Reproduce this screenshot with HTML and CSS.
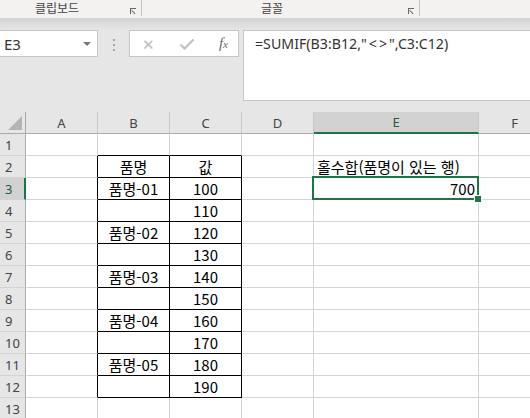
FILE: index.html
```html
<!DOCTYPE html>
<html lang="ko">
  <head>
    <meta charset="UTF-8" />
    <title>SUMIF</title>
    <link rel="stylesheet" href="styles.css">
  </head>
  <body>
    <div class="ribbon">
      <div class="group g-clip">
        <span class="group-label">클립보드</span>
        <span class="launcher"></span>
      </div>
      <div class="group g-font">
        <span class="group-label">글꼴</span>
        <span class="launcher"></span>
      </div>
    </div>
    <div class="ribbon-shadow"></div>

    <div class="formula-bar">
      <div class="name-box">
        <span>E3</span>
        <span class="caret"></span>
      </div>
      <div class="grip"><i></i><i></i><i></i></div>
      <div class="fx-buttons">
        <span class="btn-x">✕</span>
        <svg class="btn-ok" width="16" height="12" viewBox="0 0 16 12">
          <path d="M1.5 6.5 L5.5 10.5 L14.5 1.5" fill="none" stroke="#c3c3c3" stroke-width="2.4" />
        </svg>
        <span class="btn-fx"><i>f</i><i class="x">x</i></span>
      </div>
      <div class="formula">=SUMIF(B3:B12,"<span class="op">&lt;&gt;</span>",C3:C12)</div>
    </div>

    <div class="sheet">
      <!-- header -->
      <div class="corner"><span class="tri"></span></div>
      <div class="ch">A</div>
      <div class="ch">B</div>
      <div class="ch">C</div>
      <div class="ch">D</div>
      <div class="ch active">E</div>
      <div class="ch">F</div>

      <!-- 1 -->
      <div class="rh">1</div>
      <div class="c"></div>
      <div class="c tb"></div>
      <div class="c tb"></div>
      <div class="c"></div>
      <div class="c"></div>
      <div class="c"></div>

      <!-- 2 -->
      <div class="rh">2</div>
      <div class="c tr"></div>
      <div class="c box mid">품명</div>
      <div class="c box mid">값</div>
      <div class="c"></div>
      <div class="c">홀수합(품명이 있는 행)</div>
      <div class="c"></div>

      <!-- 3 -->
      <div class="rh active">3</div>
      <div class="c tr"></div>
      <div class="c box mid">품명-01</div>
      <div class="c box mid">100</div>
      <div class="c"></div>
      <div class="c num selected">700<span class="sel"><span class="handle"></span></span></div>
      <div class="c"></div>

      <!-- 4 -->
      <div class="rh">4</div>
      <div class="c tr"></div>
      <div class="c box mid"></div>
      <div class="c box mid">110</div>
      <div class="c"></div>
      <div class="c"></div>
      <div class="c"></div>

      <!-- 5 -->
      <div class="rh">5</div>
      <div class="c tr"></div>
      <div class="c box mid">품명-02</div>
      <div class="c box mid">120</div>
      <div class="c"></div>
      <div class="c"></div>
      <div class="c"></div>

      <!-- 6 -->
      <div class="rh">6</div>
      <div class="c tr"></div>
      <div class="c box mid"></div>
      <div class="c box mid">130</div>
      <div class="c"></div>
      <div class="c"></div>
      <div class="c"></div>

      <!-- 7 -->
      <div class="rh">7</div>
      <div class="c tr"></div>
      <div class="c box mid">품명-03</div>
      <div class="c box mid">140</div>
      <div class="c"></div>
      <div class="c"></div>
      <div class="c"></div>

      <!-- 8 -->
      <div class="rh">8</div>
      <div class="c tr"></div>
      <div class="c box mid"></div>
      <div class="c box mid">150</div>
      <div class="c"></div>
      <div class="c"></div>
      <div class="c"></div>

      <!-- 9 -->
      <div class="rh">9</div>
      <div class="c tr"></div>
      <div class="c box mid">품명-04</div>
      <div class="c box mid">160</div>
      <div class="c"></div>
      <div class="c"></div>
      <div class="c"></div>

      <!-- 10 -->
      <div class="rh">10</div>
      <div class="c tr"></div>
      <div class="c box mid"></div>
      <div class="c box mid">170</div>
      <div class="c"></div>
      <div class="c"></div>
      <div class="c"></div>

      <!-- 11 -->
      <div class="rh">11</div>
      <div class="c tr"></div>
      <div class="c box mid">품명-05</div>
      <div class="c box mid">180</div>
      <div class="c"></div>
      <div class="c"></div>
      <div class="c"></div>

      <!-- 12 -->
      <div class="rh">12</div>
      <div class="c tr"></div>
      <div class="c box mid"></div>
      <div class="c box mid">190</div>
      <div class="c"></div>
      <div class="c"></div>
      <div class="c"></div>

      <!-- 13 -->
      <div class="rh">13</div>
      <div class="c"></div>
      <div class="c"></div>
      <div class="c"></div>
      <div class="c"></div>
      <div class="c"></div>
      <div class="c"></div>
    </div>
  </body>
</html>
```

FILE: styles.css
```css
html,
body {
  margin: 0;
  padding: 0;
}
body {
  width: 530px;
  height: 418px;
  overflow: hidden;
  background: #e6e6e6;
  font-family: "Noto Sans", "Noto Sans CJK KR", sans-serif;
  color: #222;
}

/* ribbon strip */
.ribbon {
  display: flex;
  height: 18px;
  background: #f3f2f1;
}
.group {
  position: relative;
  display: flex;
  align-items: center;
  height: 16px;
  border-right: 1px solid #c8c6c4;
  box-sizing: border-box;
}
.g-clip {
  width: 142px;
  padding-left: 35px;
}
.g-font {
  width: 278px;
  padding-left: 119px;
}
.group-label {
  font-family: "Noto Sans CJK KR", sans-serif;
  font-size: 12px;
  line-height: 16px;
  color: #444;
}
.launcher {
  position: absolute;
  right: 5px;
  top: 8px;
  width: 5px;
  height: 5px;
  border-left: 1px solid #666;
  border-top: 1px solid #666;
}
.launcher::after {
  content: "";
  position: absolute;
  left: 1px;
  top: 1px;
  width: 5px;
  height: 1px;
  background: #666;
  transform-origin: 0 0;
  transform: rotate(45deg);
}
.ribbon-shadow {
  height: 12px;
  background: linear-gradient(#d3d3d3, #e6e6e6);
}

/* formula bar */
.formula-bar {
  display: flex;
  height: 71px;
}
.name-box {
  display: flex;
  align-items: center;
  justify-content: space-between;
  width: 98px;
  height: 27px;
  box-sizing: border-box;
  padding: 0 6px 0 4px;
  background: #fff;
  border: 1px solid #c6c6c6;
  border-left: none;
  font-size: 15px;
  color: #333;
}
.caret {
  width: 0;
  height: 0;
  border-left: 4px solid transparent;
  border-right: 4px solid transparent;
  border-top: 4px solid #777;
}
.grip {
  display: flex;
  flex-direction: column;
  align-items: center;
  gap: 3px;
  width: 31px;
  height: 27px;
  padding-top: 9px;
  box-sizing: border-box;
}
.grip i {
  width: 2px;
  height: 2px;
  background: #a6a6a6;
}
.fx-buttons {
  display: flex;
  align-items: center;
  justify-content: space-between;
  width: 110px;
  height: 27px;
  box-sizing: border-box;
  padding: 0 10px 0 12px;
  background: #fff;
  border: 1px solid #c6c6c6;
}
.btn-x {
  font-size: 15px;
  color: #bdbdbd;
}
.btn-ok {
  display: block;
}
.btn-fx {
  font-family: "Liberation Serif", serif;
  font-style: italic;
  font-size: 15px;
  color: #6a6a6a;
}
.btn-fx i {
  font-style: italic;
}
.btn-fx .x {
  font-size: 11px;
}
.formula {
  flex: 1;
  margin-left: 4px;
  margin-right: -2px;
  padding: 3px 0 0 11px;
  background: #fff;
  border: 1px solid #c6c6c6;
  font-size: 14.2px;
  line-height: 20px;
  color: #333;
}
.formula .op {
  letter-spacing: 2px;
  padding-left: 2px;
}

/* sheet */
.sheet {
  display: grid;
  grid-template-columns: 26px 72px 72px 72px 72px 165px 72px;
  grid-auto-rows: 22px;
  margin-top: 11px;
  background: #fff;
}
.corner,
.ch,
.rh {
  background: #e6e6e6;
  box-sizing: border-box;
  color: #444;
  font-size: 13px;
}
.corner {
  display: flex;
  align-items: flex-end;
  justify-content: flex-end;
  padding: 0 3px 3px 0;
  border-right: 1px solid #ababab;
  border-bottom: 1px solid #ababab;
}
.tri {
  width: 14px;
  height: 14px;
  background: #b4b4b4;
  clip-path: polygon(100% 0, 100% 100%, 0 100%);
}
.ch {
  display: flex;
  align-items: center;
  justify-content: center;
  border-right: 1px solid #c8c8c8;
  border-bottom: 1px solid #ababab;
}
.ch.active {
  background: #d2d2d2;
  border-bottom: 2px solid #217346;
  color: #1f5c3a;
}
.rh {
  display: flex;
  align-items: center;
  padding-left: 5px;
  border-right: 1px solid #ababab;
  border-bottom: 1px solid #d4d4d4;
}
.rh.active {
  background: #d2d2d2;
  border-right: 2px solid #217346;
  color: #1f5c3a;
}
.c {
  position: relative;
  box-sizing: border-box;
  padding: 0 3px;
  border-right: 1px solid #d4d4d4;
  border-bottom: 1px solid #d4d4d4;
  font-family: "Noto Sans CJK KR", sans-serif;
  font-size: 15px;
  line-height: 21px;
  white-space: nowrap;
  color: #000;
}
.c.mid {
  text-align: center;
}
.c.num {
  text-align: right;
}
.c.box {
  border-right-color: #000;
  border-bottom-color: #000;
}
.c.tr {
  border-right-color: #000;
}
.c.tb {
  border-bottom-color: #000;
}

/* active cell */
.c.selected {
  z-index: 2;
}
.sel {
  position: absolute;
  left: -2px;
  top: -2px;
  right: -1px;
  bottom: -1px;
  border: 2px solid #217346;
}
.handle {
  position: absolute;
  right: -4px;
  bottom: -4px;
  width: 6px;
  height: 6px;
  background: #217346;
  box-shadow: 0 0 0 1px #fff;
}
```
